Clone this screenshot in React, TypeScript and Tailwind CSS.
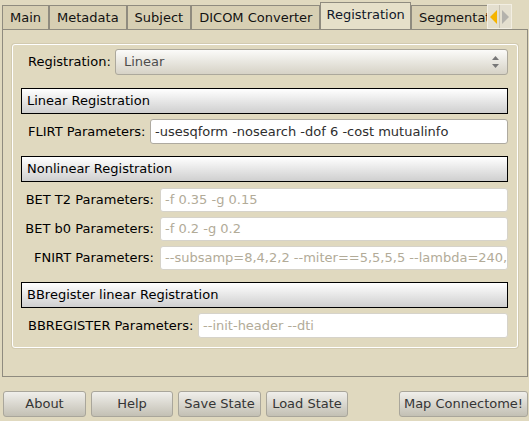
import React from 'react';

const tabs = ['Main', 'Metadata', 'Subject', 'DICOM Converter', 'Registration', 'Segmentation'];

const Header: React.FC<{ title: string }> = ({ title }) => (
  <div className="ml-[8px] mr-[9px] h-[26px] border border-black bg-gradient-to-b from-white to-[#cfcfcf] flex items-center pl-[5px] text-black">
    {title}
  </div>
);

const Field: React.FC<{ value: string; active?: boolean }> = ({ value, active }) => (
  <div
    className={`flex-1 min-w-0 h-full rounded-[3px] bg-white flex items-center pl-[4px] whitespace-nowrap overflow-hidden ${
      active ? 'border border-[#aeaaa0] text-[#2e2e2e]' : 'border border-[#d6d3ca] text-[#b2ab98]'
    }`}
  >
    {value}
  </div>
);

const Button: React.FC<{ label: string; w: string }> = ({ label, w }) => (
  <button
    className={`${w} h-[26px] rounded-[3px] border border-[#a9a69b] bg-gradient-to-b from-[#f0efeb] to-[#c3c0b4] text-[#353535] flex items-center justify-center`}
  >
    {label}
  </button>
);

export default function App() {
  return (
    <div className="w-[529px] h-[421px] bg-[#e0d9bf] overflow-hidden font-['DejaVu_Sans',sans-serif] text-[13px] text-black">
      {/* Tab bar */}
      <div className="flex h-[29px] pl-[2px]">
        <div className="w-[485px] flex items-end overflow-hidden">
          {tabs.map((t) => {
            const sel = t === 'Registration';
            return (
              <div
                key={t}
                className={`shrink-0 flex items-center border-t border-l border-r border-[#8f8b7f] ${
                  sel
                    ? 'px-[5px] h-[28px] bg-[#e6e0c9] text-[#10182a] relative z-10 -mb-px pb-[3px]'
                    : 'px-[7px] h-[24px] bg-[#d7cfb3] text-[#121212]'
                }`}
              >
                {t}
              </div>
            );
          })}
        </div>
        <div className="mt-[4px] h-[25px] w-[25px] flex border border-[#f2eee2] bg-[#e4dfcf]">
          <div className="w-1/2 flex items-center justify-center border-r border-[#c8c3b3]">
            <svg width="7" height="14" viewBox="0 0 7 14">
              <polygon points="7,0 0,7 7,14" fill="#f5b400" />
            </svg>
          </div>
          <div className="w-1/2 flex items-center justify-center">
            <svg width="7" height="14" viewBox="0 0 7 14">
              <polygon points="0,0 7,7 0,14" fill="#b4b2ac" />
            </svg>
          </div>
        </div>
      </div>

      {/* Tab pane */}
      <div className="ml-[2px] w-[526px] h-[348px] border border-[#8f8b7f] bg-[#e0d9bf] pl-[9px] pt-[14px]">
        <div className="w-[506px] h-[304px] rounded-[3px] border border-white shadow-[0_0_0_1px_#d2cab0] pt-[4px] flex flex-col">
          {/* Registration combo */}
          <div className="flex items-center h-[26px] pl-[15px] pr-[9px]">
            <span className="w-[87px] shrink-0">Registration:</span>
            <div className="flex-1 h-full rounded-[3px] border border-[#aca89c] bg-gradient-to-b from-[#fbfbf9] to-[#d6d2c6] flex items-center justify-between pl-[8px] pr-[8px] text-[#4d4d4d]">
              <span>Linear</span>
              <svg width="7" height="14" viewBox="0 0 7 14">
                <polygon points="3.5,1 7,5 0,5" fill="#777" />
                <polygon points="0,9 7,9 3.5,13" fill="#777" />
              </svg>
            </div>
          </div>

          <div className="mt-[13px]">
            <Header title="Linear Registration" />
          </div>
          <div className="mt-[5px] flex items-center h-[25px] pl-[15px] pr-[9px]">
            <span className="w-[122px] shrink-0">FLIRT Parameters:</span>
            <Field value="-usesqform -nosearch -dof 6 -cost mutualinfo" active />
          </div>

          <div className="mt-[12px]">
            <Header title="Nonlinear Registration" />
          </div>
          <div className="mt-[6px] grid grid-cols-[132px_minmax(0,1fr)] gap-y-[5px] pl-[15px] pr-[9px]">
            <span className="h-[24px] flex items-center justify-end pr-[6px] whitespace-nowrap">BET T2 Parameters:</span>
            <div className="h-[24px] flex min-w-0">
              <Field value="-f 0.35 -g 0.15" />
            </div>
            <span className="h-[24px] flex items-center justify-end pr-[6px] whitespace-nowrap">BET b0 Parameters:</span>
            <div className="h-[24px] flex min-w-0">
              <Field value="-f 0.2 -g 0.2" />
            </div>
            <span className="h-[24px] flex items-center justify-end pr-[6px] whitespace-nowrap">FNIRT Parameters:</span>
            <div className="h-[24px] flex min-w-0">
              <Field value="--subsamp=8,4,2,2 --miter==5,5,5,5 --lambda=240," />
            </div>
          </div>

          <div className="mt-[12px]">
            <Header title="BBregister linear Registration" />
          </div>
          <div className="mt-[5px] flex items-center h-[25px] pl-[15px] pr-[9px]">
            <span className="w-[170px] shrink-0 whitespace-nowrap">BBREGISTER Parameters:</span>
            <Field value="--init-header --dti" />
          </div>
        </div>
      </div>

      {/* Footer buttons */}
      <div className="flex mt-[14px] pl-[3px]">
        <div className="flex gap-[5px]">
          <Button label="About" w="w-[83px]" />
          <Button label="Help" w="w-[82px]" />
          <Button label="Save State" w="w-[83px]" />
          <Button label="Load State" w="w-[82px]" />
        </div>
        <div className="ml-[51px]">
          <Button label="Map Connectome!" w="w-[129px]" />
        </div>
      </div>
    </div>
  );
}
